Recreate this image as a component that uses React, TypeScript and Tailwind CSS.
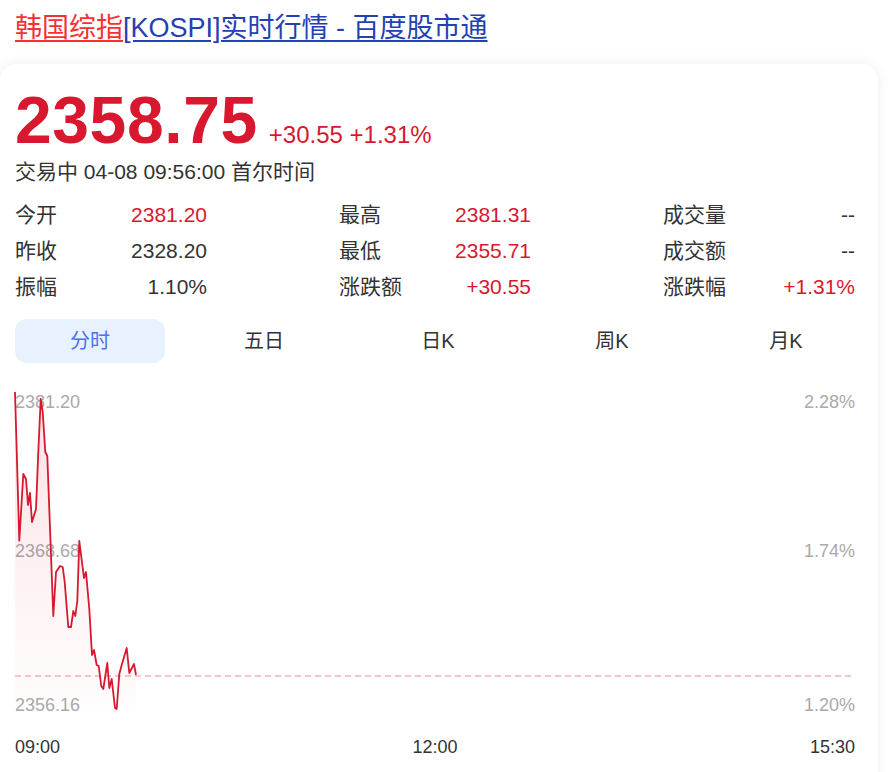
import React from "react";

const RED = "#d7182f";

const stats = [
    [
        { label: "今开", value: "2381.20", red: true },
        { label: "最高", value: "2381.31", red: true },
        { label: "成交量", value: "--", red: false },
    ],
    [
        { label: "昨收", value: "2328.20", red: false },
        { label: "最低", value: "2355.71", red: true },
        { label: "成交额", value: "--", red: false },
    ],
    [
        { label: "振幅", value: "1.10%", red: false },
        { label: "涨跌额", value: "+30.55", red: true },
        { label: "涨跌幅", value: "+1.31%", red: true },
    ],
];

const tabs = ["分时", "五日", "日K", "周K", "月K"];

// intraday points, chart coords (840 x 317)
const pts: [number, number][] = [
    [0, 0], [4.3, 148.7], [8.3, 82], [11, 87], [13, 113], [15, 101], [17, 130], [21, 117],
    [23.3, 60], [25.7, 7], [27.7, 20], [30.3, 60], [32.3, 64], [38.3, 224], [41, 180],
    [45, 174], [47.7, 175], [49.7, 190], [53.3, 235], [56, 235], [58.3, 219], [60.3, 224],
    [62.3, 209], [64.3, 149], [69, 186], [71, 180], [74.3, 217], [77, 263], [79, 258],
    [81.7, 273], [83.7, 274], [86.3, 294], [88.3, 297], [92.3, 271], [94.3, 296], [96.7, 287],
    [100, 316], [101.7, 317], [104.3, 282], [106.7, 273], [111.7, 256], [114.3, 281],
    [119, 272], [121, 283],
];

function Chart() {
    const line = pts.map(([x, y], i) => `${i ? "L" : "M"}${x} ${y}`).join(" ");
    const last = pts[pts.length - 1];
    const area = `${line} L${last[0]} 317 L0 317 Z`;

    return (
        <div className="relative h-[317px] mt-[29px]">
            <div className="absolute inset-0 flex flex-col justify-between text-[18px] leading-[20px] text-[#aaa]">
                <span>2381.20</span>
                <span>2368.68</span>
                <span className="translate-y-[6px]">2356.16</span>
            </div>
            <div className="absolute inset-0 flex flex-col justify-between items-end text-[18px] leading-[20px] text-[#aaa]">
                <span>2.28%</span>
                <span>1.74%</span>
                <span className="translate-y-[6px]">1.20%</span>
            </div>
            <svg className="absolute inset-0 overflow-visible" width="840" height="317" viewBox="0 0 840 317">
                <defs>
                    <linearGradient id="fill" x1="0" y1="0" x2="0" y2="1">
                        <stop offset="0%" stopColor={RED} stopOpacity="0.12" />
                        <stop offset="100%" stopColor={RED} stopOpacity="0.01" />
                    </linearGradient>
                </defs>
                <path d={area} fill="url(#fill)" />
                <line x1="0" y1="284" x2="840" y2="284" stroke="#ee8a8a" strokeWidth="1" strokeDasharray="6 4" />
                <path d={line} fill="none" stroke={RED} strokeWidth="1.8" strokeLinejoin="round" />
            </svg>
        </div>
    );
}

export default function App() {
    return (
        <div className="min-h-[772px] bg-white font-['Liberation_Sans','Noto_Sans_CJK_SC',sans-serif] text-[#333]">
            <div className="pt-2 pb-4 pl-[15px] text-[27px] leading-[40px]">
                <span className="text-[#f73131] underline underline-offset-[3px]">韩国综指</span>
                <span className="text-[#2440b3] underline underline-offset-[3px]">[KOSPI]实时行情 - 百度股市通</span>
            </div>

            <div className="w-[878px] rounded-2xl bg-white shadow-[0_0_14px_rgba(0,0,0,0.07)] pl-[15px] pr-[23px] pt-[20px] pb-10">
                <div className="flex items-baseline gap-[11px]">
                    <span className="text-[66px] leading-[72px] font-bold tracking-[0.6px] text-[#d7182f]">2358.75</span>
                    <span className="text-[24px] text-[#d7182f]">+30.55 +1.31%</span>
                </div>
                <div className="text-[21px] leading-[28px] translate-y-[2px]">
                    交易中 04-08 09:56:00 首尔时间
                </div>

                <div className="mt-[13px] grid grid-cols-3 gap-x-[132px] text-[21px]">
                    {stats.flat().map((s) => (
                        <div key={s.label} className="flex h-[36px] items-center justify-between">
                            <span>{s.label}</span>
                            <span className={s.red ? "text-[#d7182f]" : "text-[#333]"}>{s.value}</span>
                        </div>
                    ))}
                </div>

                <div className="mt-[14px] flex gap-[24px] text-[20px]">
                    {tabs.map((t, i) => (
                        <div
                            key={t}
                            className={`flex h-[44px] w-[150px] shrink-0 items-center justify-center rounded-xl ${i === 0 ? "bg-[#e8f1fe] text-[#4e6ef2]" : "text-[#333]"}`}
                        >
                            {t}
                        </div>
                    ))}
                </div>

                <Chart />

                <div className="mt-[24px] flex justify-between text-[18px] leading-[28px]">
                    <span>09:00</span>
                    <span>12:00</span>
                    <span>15:30</span>
                </div>
            </div>
        </div>
    );
}
